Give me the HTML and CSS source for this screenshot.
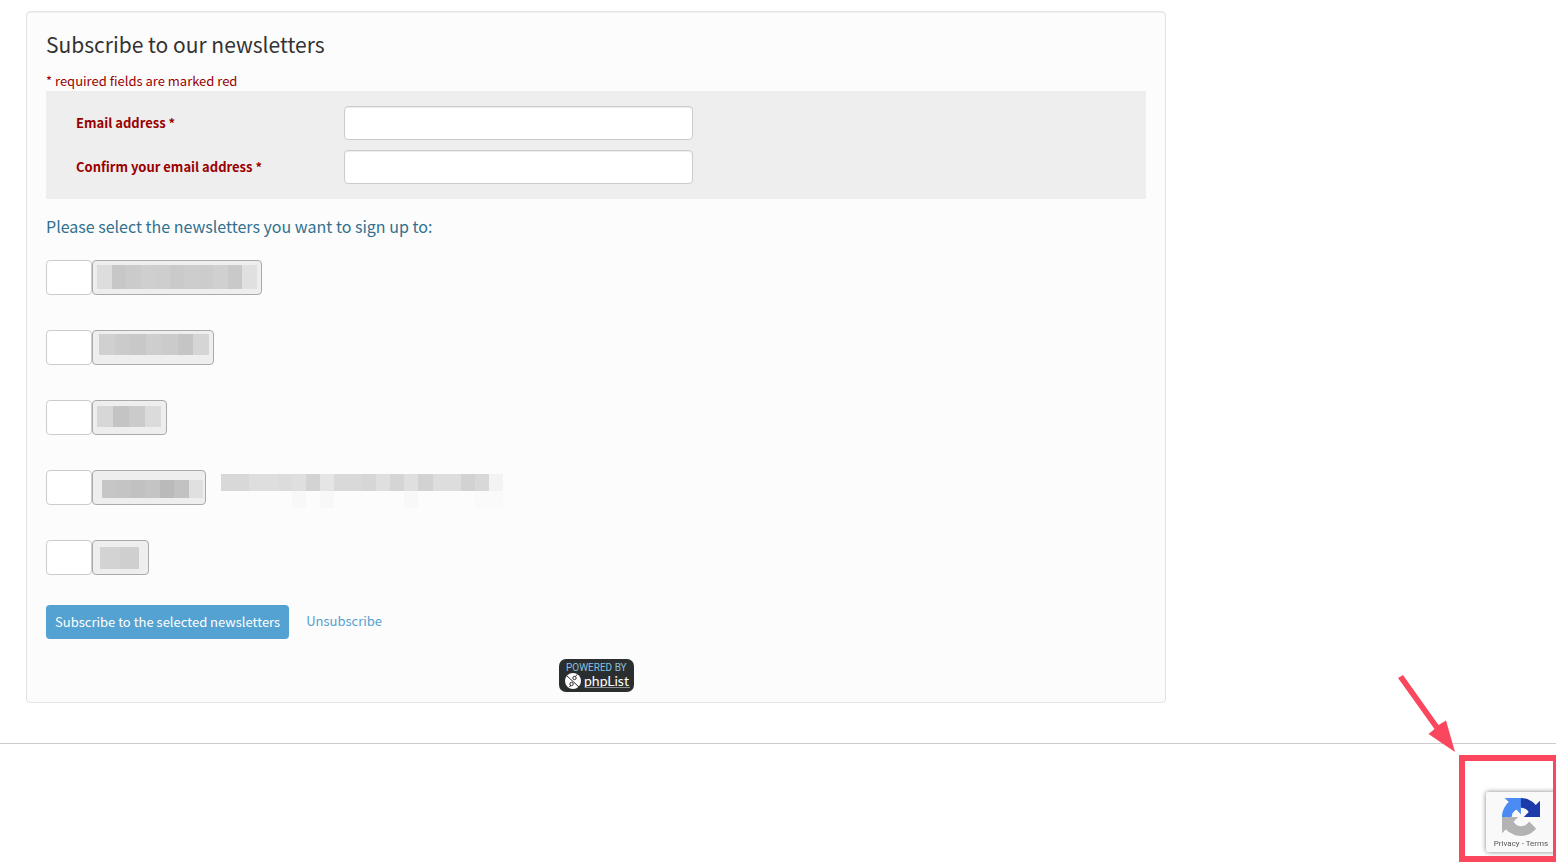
FILE: index.html
```
<!DOCTYPE html>
<html lang="en">
<head>
<meta charset="utf-8">
<title>Subscribe to our newsletters</title>
<link rel="stylesheet" href="styles.css">
</head>
<body>
<main class="panel">
  <form class="subscribe-form">
    <h1 class="title">Subscribe to our newsletters</h1>
    <p class="required-note">* required fields are marked red</p>
    <div class="fields">
      <label class="field-label" for="email">Email address *</label>
      <input class="field-input" id="email" type="email">
      <label class="field-label" for="email-confirm">Confirm your email address *</label>
      <input class="field-input" id="email-confirm" type="email">
    </div>
    <h2 class="list-title">Please select the newsletters you want to sign up to:</h2>
    <ul class="lists">
      <li class="list-item">
        <input class="list-check" type="checkbox" id="list1">
        <label class="list-name" for="list1" aria-label="Newsletter 1">
          <svg width="168" height="33" viewBox="1 1 168 33" shape-rendering="crispEdges">
            <path fill="#ddd" d="M5 5h15v24H5z"/><path fill="#c7c7c7" d="M20 5h14v24H20z"/><path fill="#cbcbcb" d="M34 5h15v24H34z"/><path fill="#cfcfcf" d="M49 5h14v24H49z"/><path fill="#cecece" d="M63 5h15v24H63z"/><path fill="#cacaca" d="M78 5h14v24H78z"/><path fill="#cdcdcd" d="M92 5h15v24H92z"/><path fill="#ccc" d="M107 5h14v24h-14z"/><path fill="#d0d0d0" d="M121 5h15v24h-15z"/><path fill="#c9c9c9" d="M136 5h14v24h-14z"/><path fill="#e0e0e0" d="M150 5h15v24h-15z"/>
          </svg>
        </label>
      </li>
      <li class="list-item">
        <input class="list-check" type="checkbox" id="list2">
        <label class="list-name" for="list2" aria-label="Newsletter 2">
          <svg width="120" height="33" viewBox="1 1 120 33" shape-rendering="crispEdges">
            <path fill="#d0d0d0" d="M7 4h16v21H7z"/><path fill="#cbcbcb" d="M23 4h15v21H23z"/><path fill="#c8c8c8" d="M38 4h16v21H38z"/><path fill="#cecece" d="M54 4h16v21H54z"/><path fill="#cbcbcb" d="M70 4h16v21H70z"/><path fill="#c5c5c5" d="M86 4h15v21H86z"/><path fill="#d5d5d5" d="M101 4h16v21h-16z"/>
          </svg>
        </label>
      </li>
      <li class="list-item">
        <input class="list-check" type="checkbox" id="list3">
        <label class="list-name" for="list3" aria-label="Newsletter 3">
          <svg width="73" height="33" viewBox="1 1 73 33" shape-rendering="crispEdges">
            <path fill="#d7d7d7" d="M5 6h16v21H5z"/><path fill="#c4c4c4" d="M21 6h16v21H21z"/><path fill="#cbcbcb" d="M37 6h16v21H37z"/><path fill="#dbdbdb" d="M53 6h16v21H53z"/>
          </svg>
        </label>
      </li>
      <li class="list-item">
        <input class="list-check" type="checkbox" id="list4">
        <label class="list-name" for="list4" aria-label="Newsletter 4">
          <svg width="112" height="33" viewBox="1 1 112 33" shape-rendering="crispEdges">
            <path fill="#c6c6c6" d="M10 10h14v18H10z"/><path fill="#c4c4c4" d="M24 10h15v18H24z"/><path fill="#c1c1c1" d="M39 10h14v18H39z"/><path fill="#c4c4c4" d="M53 10h15v18H53z"/><path fill="#bababa" d="M68 10h14v18H68z"/><path fill="#c2c2c2" d="M82 10h15v18H82z"/><path fill="#e0e0e0" d="M97 10h14v18H97z"/>
          </svg>
        </label>
        <svg class="list-description" width="282" height="35" viewBox="0 0 282 35" shape-rendering="crispEdges">
          <path fill="#d8d8d8" d="M0 4h28v17H0z"/><path fill="#dedede" d="M28 4h29v17H28z"/><path fill="#dcdcdc" d="M57 4h14v17H57z"/><path fill="#dfdfdf" d="M71 4h14v17H71z"/><path fill="#d3d3d3" d="M85 4h14v17H85z"/><path fill="#e5e5e5" d="M99 4h14v17H99z"/><path fill="#d9d9d9" d="M113 4h28v17h-28z"/><path fill="#d6d6d6" d="M141 4h14v17h-14z"/><path fill="#dfdfdf" d="M155 4h14v17h-14z"/><path fill="#d5d5d5" d="M169 4h14v17h-14z"/><path fill="#dfdfdf" d="M183 4h14v17h-14z"/><path fill="#d2d2d2" d="M197 4h15v17h-15z"/><path fill="#ddd" d="M212 4h28v17h-28z"/><path fill="#d2d2d2" d="M240 4h14v17h-14z"/><path fill="#d8d8d8" d="M254 4h14v17h-14z"/><path fill="#f3f3f3" d="M268 4h14v17h-14z"/>
          <path fill="#f8f8f8" d="M71 21h14v17H71zM99 21h14v17H99zM183 21h14v17h-14z"/><path fill="#fafafa" d="M254 21h28v17h-28z"/>
        </svg>
      </li>
      <li class="list-item">
        <input class="list-check" type="checkbox" id="list5">
        <label class="list-name" for="list5" aria-label="Newsletter 5">
          <svg width="55" height="33" viewBox="1 1 55 33" shape-rendering="crispEdges">
            <path fill="#d3d3d3" d="M8 7h20v22H8z"/><path fill="#cfcfcf" d="M28 7h19v22H28z"/>
          </svg>
        </label>
      </li>
    </ul>
    <div class="actions">
      <button class="submit" type="submit">Subscribe to the selected newsletters</button>
      <a class="unsubscribe" href="#">Unsubscribe</a>
    </div>
  </form>
  <a class="powered" href="#" aria-label="Powered by phpList">
    <svg width="75" height="33" viewBox="0 0 75 33">
      <rect width="75" height="33" rx="7" fill="#2b2e2f"/>
      <text class="powered-top" x="7" y="12" fill="#85c1df">POWERED BY</text>
      <circle cx="14" cy="22" r="8" fill="#fff"/>
      <g fill="none" stroke="#2b2e2f" stroke-width="1">
        <path d="M7.500 16.500L20 28M10.500 28l1.500-2M16.500 17.500l1.500-2"/>
        <circle cx="15.500" cy="19" r="1.700"/><circle cx="12.500" cy="25" r="1.700"/>
      </g>
      <text class="powered-name" x="25" y="27" fill="#fff">phpList</text>
      <path d="M26 28.500h45" stroke="#8d9091" stroke-width="1"/>
    </svg>
  </a>
</main>
<hr class="divider">
<aside class="recaptcha">
  <svg class="recaptcha-logo" width="38" height="38" viewBox="0 0 64 64" aria-hidden="true">
    <path fill="#1c3aa9" d="M64 31.955l-.033-1.370V4.687l-7.160 7.160C50.948 4.674 42.033.093 32.050.093c-10.400 0-19.622 4.960-25.458 12.640l11.736 11.860a15.550 15.550 0 0 1 4.754-5.334c2.050-1.600 4.952-2.906 8.968-2.906.485 0 .860.057 1.135.163 4.976.393 9.288 3.140 11.828 7.124l-8.307 8.307L64 31.953"/>
    <path fill="#4a8cf4" d="M31.862.094l-1.370.033H4.594l7.160 7.160C4.580 13.147 0 22.060 0 32.046c0 10.400 4.960 19.622 12.640 25.458L24.500 45.768a15.550 15.550 0 0 1-5.334-4.754c-1.600-2.050-2.906-4.952-2.906-8.968 0-.485.057-.860.163-1.135.393-4.976 3.140-9.288 7.124-11.828l8.307 8.307L31.860.095"/>
    <path fill="#b3b3b3" d="M.001 32.045l.033 1.370v25.898l7.160-7.160c5.860 7.173 14.774 11.754 24.760 11.754 10.400 0 19.622-4.960 25.458-12.640l-11.736-11.860a15.550 15.550 0 0 1-4.754 5.334c-2.050 1.600-4.952 2.906-8.968 2.906-.485 0-.860-.057-1.135-.163-4.976-.393-9.288-3.140-11.828-7.124l8.307-8.307c-10.522.040-22.400.066-27.295-.005"/>
  </svg>
  <div class="recaptcha-links"><a href="#">Privacy</a> - <a href="#">Terms</a></div>
</aside>
<div class="highlight"></div>
<svg class="arrow" width="60" height="80" viewBox="0 0 60 80" aria-hidden="true">
  <path fill="#fb475e" d="M2 5L7 2L42.500 52L50 47.500L59 79L32.500 61L38.500 56z"/>
</svg>
</body>
</html>
```

FILE: styles.css
```
* {
  box-sizing: border-box;
}

body {
  margin: 0;
  background: #fff;
  color: #333;
  font: 13px/20px "Noto Sans CJK SC", sans-serif;
}

.panel {
  max-width: 1140px;
  margin: 11px 26px 40px;
  padding: 19px 19px 10px;
  border: 1px solid #e3e3e3;
  border-radius: 4px;
  background: #fcfcfc;
  box-shadow: inset 0 1px 1px rgba(0, 0, 0, 0.05);
}

.title {
  margin: 0 0 14px;
  color: #333;
  font-size: 21px;
  line-height: 26px;
  font-weight: 400;
}

.required-note {
  margin: 0;
  color: #990000;
  line-height: 20px;
}

.fields {
  display: grid;
  grid-template-columns: 258px minmax(0, 349px);
  align-items: center;
  gap: 10px;
  padding: 15px 30px;
  background: #eee;
}

.field-label {
  color: #990000;
  font-weight: 700;
  line-height: 22px;
}

.field-input {
  width: 100%;
  height: 34px;
  padding: 6px 12px;
  border: 1px solid #ccc;
  border-radius: 4px;
  background: #fff;
  font: inherit;
  box-shadow: inset 0 1px 1px rgba(0, 0, 0, 0.08);
}

.list-title {
  margin: 17px 0 24px;
  color: #31708f;
  font-size: 16px;
  line-height: 20px;
  font-weight: 400;
}

.lists {
  display: flex;
  flex-direction: column;
  gap: 35px;
  margin: 0 0 30px;
  padding: 0;
  list-style: none;
}

.list-item {
  display: flex;
}

.list-check {
  appearance: none;
  width: 46px;
  height: 35px;
  margin: 0;
  border: 1px solid #ccc;
  border-radius: 4px;
  background: #fff;
}

.list-name {
  overflow: hidden;
  border: 1px solid #aaa;
  border-radius: 4px;
  background: #eee;
}

.list-name svg {
  display: block;
}

.list-description {
  margin-left: 15px;
  overflow: visible;
}

.actions {
  display: flex;
  align-items: flex-start;
  gap: 17px;
  margin-bottom: 20px;
}

.submit {
  height: 34px;
  padding: 0 9px;
  border: 0;
  border-radius: 4px;
  background: #54a2d1;
  color: #fff;
  font-family: inherit;
  font-size: 13px;
  line-height: 20px;
}

.unsubscribe {
  color: #54a2d1;
  line-height: 32px;
  text-decoration: none;
}

.powered {
  display: block;
  width: 75px;
  margin: 0 auto;
}

.powered svg {
  display: block;
}

.powered-top {
  font: 10px Roboto, sans-serif;
}

.powered-name {
  font: 14px Lato, sans-serif;
}

.divider {
  margin: 0;
  border: 0;
  border-top: 1px solid #ccc;
}

.recaptcha {
  position: fixed;
  right: 0;
  bottom: 14px;
  width: 70px;
  height: 60px;
  padding-top: 6px;
  border-radius: 2px 0 0 2px;
  background: #f9f9f9;
  box-shadow: 0 0 5px #808080;
  text-align: center;
}

.recaptcha-logo {
  display: block;
  margin: 0 auto;
}

.recaptcha-links {
  color: #555;
  font: 8px/16px Roboto, sans-serif;
  white-space: nowrap;
}

.recaptcha-links a {
  color: inherit;
  text-decoration: none;
}

.highlight {
  position: fixed;
  right: -3px;
  bottom: 4px;
  width: 100px;
  height: 107px;
  border: 6px solid #fb475e;
}

.arrow {
  position: fixed;
  right: 100px;
  bottom: 113px;
}
```
